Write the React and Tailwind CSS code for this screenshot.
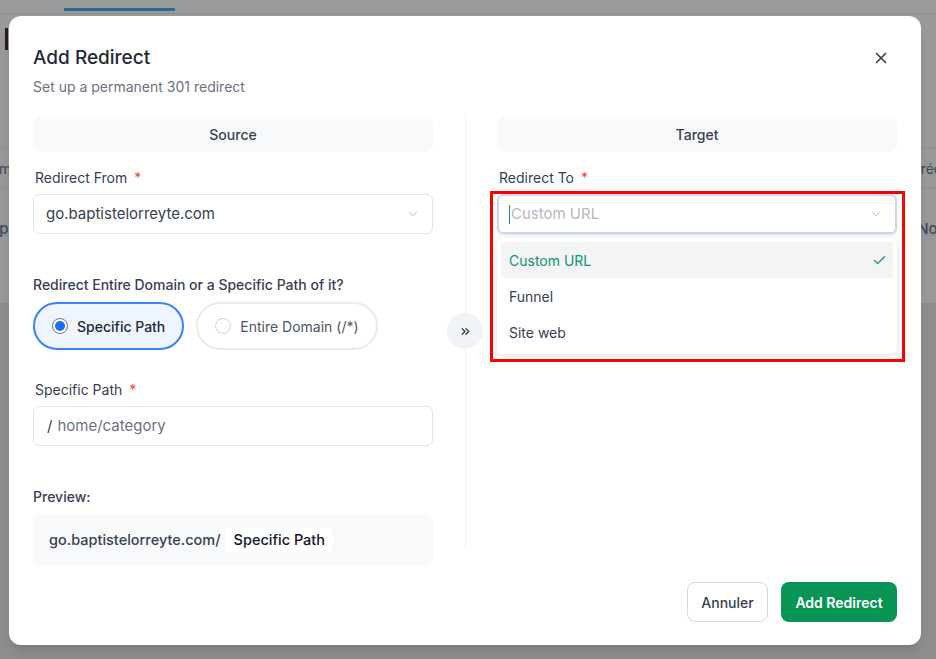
import { Check, ChevronDown, ChevronsRight, X } from 'lucide-react';
import clsx from 'clsx';

function Label({ children }) {
    return (
        <div className="flex h-5 items-center pl-[2px] text-[14px] text-[#374151]">
            {children}
            <span className="ml-[7px] text-[#ef4444]">*</span>
        </div>
    );
}

function SectionHeader({ children }) {
    return (
        <div className="flex h-[35px] items-center justify-center rounded-lg bg-[#f8f9fb] text-[14px] font-medium text-[#374151]">
            {children}
        </div>
    );
}

function RadioPill({ checked, children }) {
    return (
        <div
            className={clsx(
                'flex h-12 items-center gap-[9px] rounded-full border-2 pl-[17px] pr-[17px] text-[14px]',
                checked
                    ? 'border-[#3b82f6] bg-[#eff5ff] font-medium text-[#1f2937]'
                    : 'border-[#e8eaee] bg-white text-[#4b5563]'
            )}
        >
            <span
                className={clsx(
                    'flex h-4 w-4 items-center justify-center rounded-full border bg-white',
                    checked ? 'border-[#6b7280]' : 'border-[#d1d5db]'
                )}
            >
                {checked && <span className="h-[10px] w-[10px] rounded-full bg-[#1d6ef5]" />}
            </span>
            {children}
        </div>
    );
}

const targets = ['Custom URL', 'Funnel', 'Site web'];

function SourceColumn() {
    return (
        <div className="flex flex-col">
            <SectionHeader>Source</SectionHeader>
            <div className="mt-[15px]">
                <Label>Redirect From</Label>
            </div>
            <div className="mt-[7px] flex h-10 items-center justify-between rounded-md border border-[#e2e4e9] pl-3 pr-3 text-[15px] text-[#374151]">
                go.baptistelorreyte.com
                <ChevronDown size={14} strokeWidth={1.25} className="text-[#9ca3af]" />
            </div>
            <div className="mt-[41px] h-5 text-[14px] font-medium leading-5 text-[#374151]">
                Redirect Entire Domain or a Specific Path of it?
            </div>
            <div className="mt-[7px] flex gap-3">
                <RadioPill checked>Specific Path</RadioPill>
                <RadioPill>Entire Domain (/*)</RadioPill>
            </div>
            <div className="mt-[29px]">
                <Label>Specific Path</Label>
            </div>
            <div className="mt-[7px] flex h-10 items-center rounded-md border border-[#e2e4e9] pl-[13px] text-[15px]">
                <span className="mr-[5px] text-[#374151]">/</span>
                <span className="text-[#6b7280]">home/category</span>
            </div>
            <div className="mt-[41px] h-5 text-[14px] font-medium leading-5 text-[#374151]">Preview:</div>
            <div className="mt-[7px] flex h-[52px] items-center rounded-lg bg-[#f8f9fb] pl-4 text-[14.5px] font-medium text-[#374151]">
                go.baptistelorreyte.com/
                <span className="ml-[5px] rounded-md bg-white px-2 py-[1px] text-[#111827]">Specific Path</span>
            </div>
        </div>
    );
}

function TargetColumn() {
    return (
        <div className="flex flex-col">
            <SectionHeader>Target</SectionHeader>
            <div className="mt-[15px]">
                <Label>Redirect To</Label>
            </div>
            <div className="relative mt-[7px]">
                <div className="flex h-10 items-center justify-between rounded-md border-2 border-[#c9d8f5] pl-[10px] pr-3 text-[15px] text-[#b4b8bf] shadow-sm">
                    <span className="flex items-center">
                        <span className="mr-px h-[19px] w-px bg-[#10946a]" />
                        Custom URL
                    </span>
                    <ChevronDown size={14} strokeWidth={1.25} className="text-[#9ca3af]" />
                </div>
                <ul className="absolute left-0 right-0 top-[44px] z-10 rounded-md bg-white p-1 shadow-[0_2px_8px_rgba(0,0,0,0.12)]">
                    {targets.map((t, i) => (
                        <li
                            key={t}
                            className={clsx(
                                'flex h-9 items-center justify-between rounded pl-2 pr-[6px] text-[14px]',
                                i === 0 ? 'bg-[#f3f4f6] text-[#10946a]' : 'text-[#374151]'
                            )}
                        >
                            {t}
                            {i === 0 && <Check size={15} strokeWidth={2} className="text-[#10946a]" />}
                        </li>
                    ))}
                </ul>
            </div>
        </div>
    );
}

function AddRedirectModal() {
    return (
        <div className="absolute left-[9px] top-4 flex h-[629px] w-[912px] flex-col rounded-xl bg-white px-6 pt-7 shadow-lg">
            <div className="flex items-start justify-between">
                <div>
                    <h2 className="h-7 text-[19px] font-medium leading-7 text-[#1f2937]">Add Redirect</h2>
                    <p className="mt-[5px] h-5 text-[14px] leading-5 text-[#6b7280]">Set up a permanent 301 redirect</p>
                </div>
                <X size={18} strokeWidth={2.2} className="mr-[7px] mt-[5px] text-[#374151]" />
            </div>
            <div className="mt-5 grid grid-cols-[400px_64px_400px]">
                <SourceColumn />
                <div className="flex flex-col items-center">
                    <div className="h-[196px] w-px bg-[#f0f1f3]" />
                    <div className="flex h-9 w-9 items-center justify-center rounded-full bg-[#f1f3f7]">
                        <ChevronsRight size={13} strokeWidth={2.5} className="text-[#374151]" />
                    </div>
                    <div className="h-[199px] w-px bg-[#f0f1f3]" />
                </div>
                <TargetColumn />
            </div>
            <div className="mt-4 flex justify-end gap-[13px]">
                <button className="h-10 w-[81px] rounded-lg border border-[#d5d8de] text-[14px] font-medium text-[#374151]">
                    Annuler
                </button>
                <button className="h-10 w-[116px] rounded-lg bg-[#079455] text-[14px] font-semibold text-white">
                    Add Redirect
                </button>
            </div>
        </div>
    );
}

// the links table behind the overlay, only its edges show past the modal
function BackdropPage() {
    return (
        <div className="flex h-full flex-col">
            <div className="flex h-[13px] bg-[#9a9a9a] pl-16">
                <div className="mt-[8px] h-[3px] w-[111px] bg-[#2b6b8f]" />
            </div>
            <div className="flex flex-col border-t border-[#8c8c8c] bg-[#999999] pt-[133px] text-[14px] text-[#3e4a5a]">
                <div className="flex h-[41px] items-center justify-between border-t border-[#8f8f8f]">
                    <span className="-ml-[20px]">Nom</span>
                    <span className="-mr-[6px]">Créé</span>
                </div>
                <div className="h-[47px] border-t border-[#8f8f8f]" />
                <div className="flex h-[68px] items-start justify-between border-t border-[#8f8f8f] text-[15px] font-medium">
                    <span className="-ml-[23px] -mt-[18px]">Map</span>
                    <span className="-mr-[10px] -mt-[18px]">Nov</span>
                </div>
            </div>
            <div className="flex-1 border-t border-[#8a8a8a] bg-[#8e8e8e]" />
            <div className="absolute left-[5px] top-[28px] h-[22px] w-[3px] bg-[#2a1a1a]" />
        </div>
    );
}

export default function App() {
    return (
        <div className="relative h-[659px] w-[936px] overflow-hidden bg-[#8e8e8e] font-['Inter',sans-serif]">
            <BackdropPage />
            <AddRedirectModal />
            <div className="pointer-events-none absolute left-[490px] top-[191px] z-20 h-[171px] w-[415px] border-[3px] border-[#ff0000]" />
        </div>
    );
}
